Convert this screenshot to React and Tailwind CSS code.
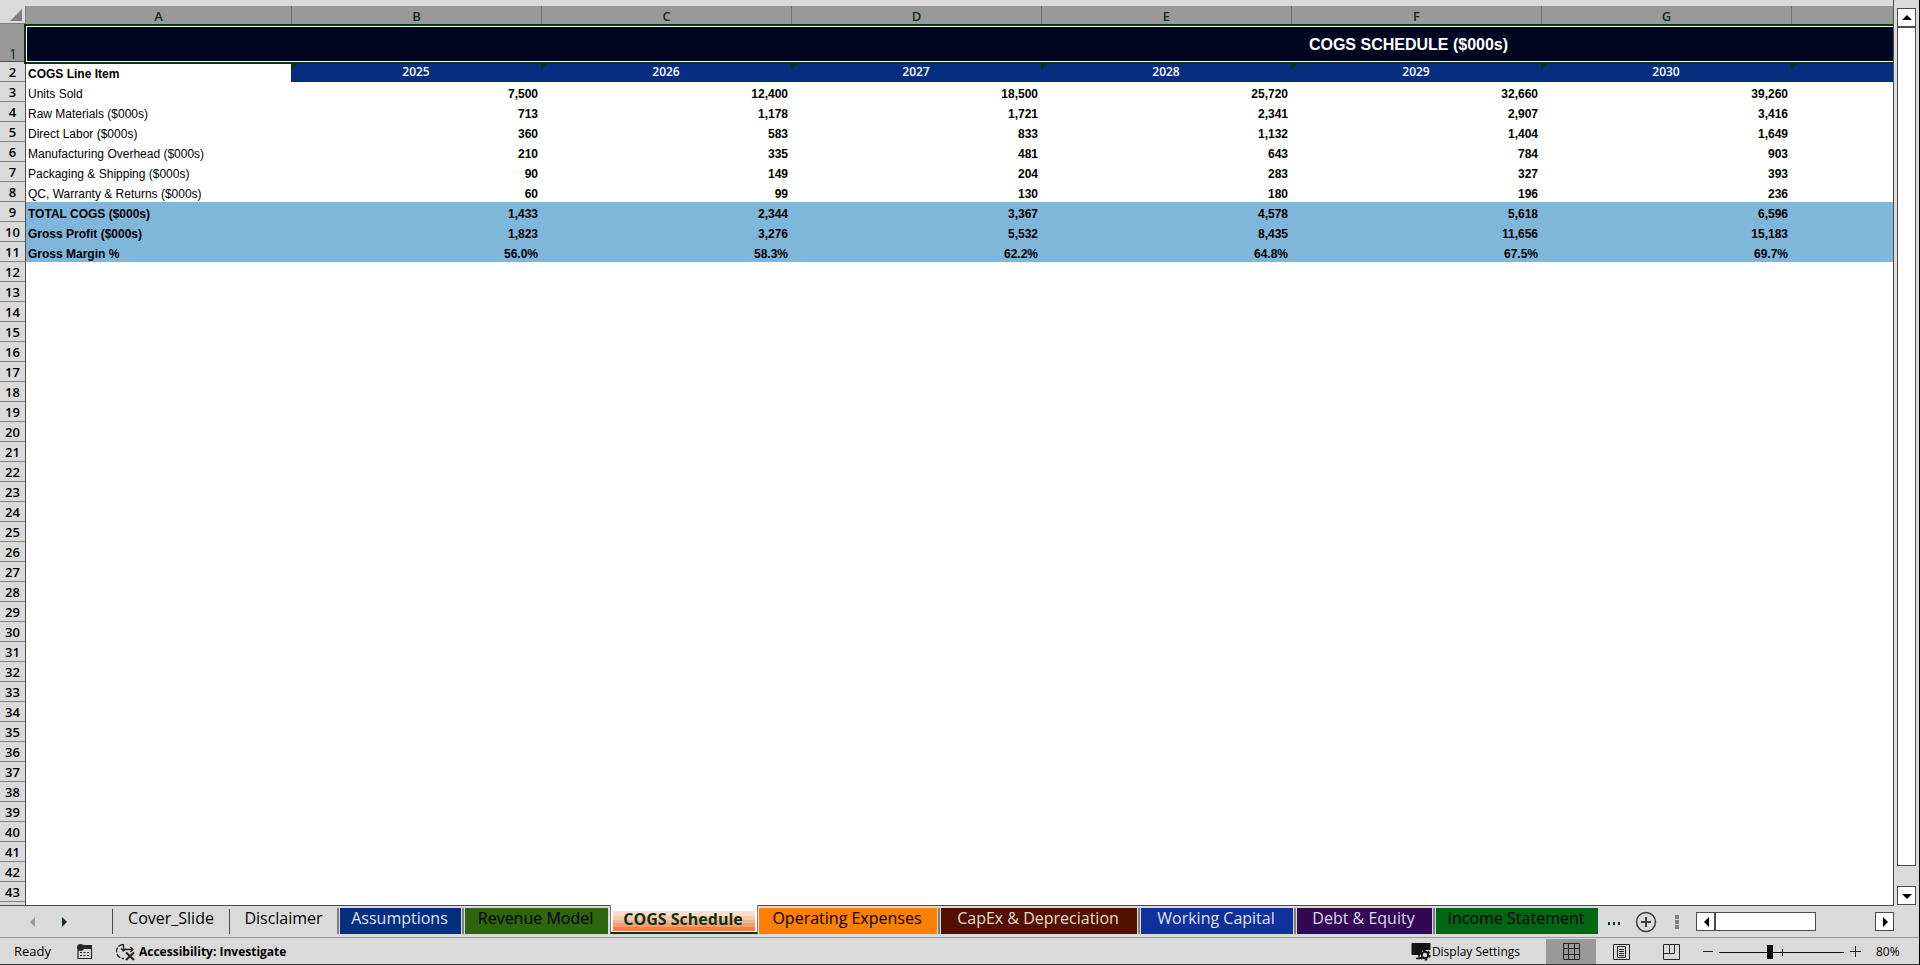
import React from 'react';

const years = ['2025', '2026', '2027', '2028', '2029', '2030', '', '', '', ''];
const letters = ['B', 'C', 'D', 'E', 'F', 'G', '', '', '', ''];

const rows = [
  { label: 'Units Sold', values: ['7,500', '12,400', '18,500', '25,720', '32,660', '39,260'] },
  { label: 'Raw Materials ($000s)', values: ['713', '1,178', '1,721', '2,341', '2,907', '3,416'] },
  { label: 'Direct Labor ($000s)', values: ['360', '583', '833', '1,132', '1,404', '1,649'] },
  { label: 'Manufacturing Overhead ($000s)', values: ['210', '335', '481', '643', '784', '903'] },
  { label: 'Packaging & Shipping ($000s)', values: ['90', '149', '204', '283', '327', '393'] },
  { label: 'QC, Warranty & Returns ($000s)', values: ['60', '99', '130', '180', '196', '236'] },
  { label: 'TOTAL COGS ($000s)', total: true, values: ['1,433', '2,344', '3,367', '4,578', '5,618', '6,596'] },
  { label: 'Gross Profit ($000s)', total: true, values: ['1,823', '3,276', '5,532', '8,435', '11,656', '15,183'] },
  { label: 'Gross Margin %', total: true, values: ['56.0%', '58.3%', '62.2%', '64.8%', '67.5%', '69.7%'] },
];

const emptyRows = Array.from({ length: 32 }, (_, i) => i + 12);

const plainTabs = [
  { name: 'Cover_Slide', width: 'w-[117px]' },
  { name: 'Disclaimer', width: 'w-[108px]' },
];

const tabs = [
  { name: 'Assumptions', cell: 'border-l-2 pl-[1px] pr-[1px]', look: 'w-[121px] bg-[#062e80] text-[#dbe6f5]' },
  { name: 'Revenue Model', cell: 'border-l-2 pl-[1px] pr-[2px]', look: 'w-[143px] bg-[#2d660e] text-black' },
  { name: 'COGS Schedule', active: true },
  { name: 'Operating Expenses', cell: 'pl-[1px] pr-[1px]', look: 'w-[178px] bg-[#ff8000] text-black' },
  { name: 'CapEx & Depreciation', cell: 'border-l-2 pl-[1px] pr-[1px]', look: 'w-[196px] bg-[#521000] text-[#ecdcc8]' },
  { name: 'Working Capital', cell: 'border-l-2 pl-[1px] pr-[1px]', look: 'w-[152px] bg-[#10309c] text-[#dbe6f5]' },
  { name: 'Debt & Equity', cell: 'border-l-2 pl-[1px] pr-[1px]', look: 'w-[135px] bg-[#330852] text-[#dcd8f0]' },
  { name: 'Income Statement', cell: 'border-l-2 pl-[1px] pr-[1px]', look: 'w-[162px] bg-[#006616] text-black' },
];

function RowHead({ n }) {
  return (
    <th scope="row" className="h-[20px] border-r border-b border-r-[#4d4d4d] border-b-[#808080] bg-[#dadada] p-0 pt-[2px] text-center font-['Open_Sans',sans-serif] text-[13px] leading-[17px] font-semibold">
      {n}
    </th>
  );
}

function Sheet() {
  return (
    <table className="w-[2791px] table-fixed border-separate border-spacing-0 font-['Liberation_Sans',Arial,sans-serif] text-[12px] leading-[16px] text-black">
      <colgroup>
        <col className="w-[26px]" />
        <col className="w-[265px]" />
        {years.map((_, i) => (
          <col key={i} className="w-[250px]" />
        ))}
      </colgroup>
      <thead className="font-['Open_Sans',sans-serif] text-[13px] leading-[16px] text-[#0a3314]">
        <tr>
          <th className="h-[18px] border-r border-b border-[#808080] bg-[#dadada] p-0">
            <button aria-label="Select all" className="ml-[10px] block">
              <svg width="13" height="12" aria-hidden="true">
                <path d="M12 0V12H0Z" fill="#808080" />
              </svg>
            </button>
          </th>
          <th scope="col" className="h-[18px] bg-[#999999] p-0 pt-[2px] text-center font-semibold">A</th>
          {letters.map((l, i) => (
            <th key={i} scope="col" className="h-[18px] border-l border-[#707070] bg-[#999999] p-0 pt-[2px] text-center font-semibold">
              {l}
            </th>
          ))}
        </tr>
      </thead>
      <tbody>
        <tr>
          <th scope="row" className="h-[38px] border-b border-[#4d4d4d] bg-[#999999] p-0 text-center align-bottom font-['Open_Sans',sans-serif] text-[14px] leading-[14px] font-normal text-[#0a3314]">
            1
          </th>
          <td colSpan={11} className="relative z-10 border-t-2 border-[#0a3314] p-0 shadow-[0_2px_0_#0a3314,-2px_0_0_#0a3314,-2px_2px_0_#0a3314]">
            <div className="flex h-[36px] items-center justify-center border border-white bg-[#030621] pt-[2px] text-[16px] font-bold text-white">
              COGS SCHEDULE ($000s)
            </div>
          </td>
        </tr>
        <tr>
          <RowHead n={2} />
          <th scope="col" className="p-0 pt-[4px] pl-[2px] text-left font-bold">COGS Line Item</th>
          {years.map((y, i) => (
            <th key={i} scope="col" className="relative bg-[#062e80] p-0 text-center font-['Open_Sans',sans-serif] text-[12px] font-semibold text-white">
              <svg className="absolute top-[2px] left-0" width="6" height="6" aria-hidden="true">
                <path d="M0 0H6L0 6Z" fill="#0a3314" />
              </svg>
              {y}
            </th>
          ))}
        </tr>
        {rows.map((r, i) => (
          <tr key={r.label} className={r.total ? 'bg-[#80b6da]' : ''}>
            <RowHead n={i + 3} />
            <td className={r.total ? 'p-0 pt-[4px] pl-[2px] font-bold' : 'p-0 pt-[4px] pl-[2px]'}>{r.label}</td>
            {years.map((_, c) => (
              <td key={c} className="p-0 pt-[4px] pr-[3px] text-right font-bold">{r.values[c]}</td>
            ))}
          </tr>
        ))}
        {emptyRows.map((n) => (
          <tr key={n}>
            <RowHead n={n} />
            <td colSpan={11} className="p-0" />
          </tr>
        ))}
      </tbody>
    </table>
  );
}

function Arrow({ d }) {
  return (
    <svg width="12" height="12" viewBox="0 0 12 12" aria-hidden="true">
      <path d={d} fill="currentColor" />
    </svg>
  );
}

const UP = 'M6 3L11 8H1Z';
const DOWN = 'M1 4H11L6 9Z';
const LEFT = 'M9 1V11L4 6Z';
const RIGHT = 'M4 1V11L9 6Z';

function ScrollButton({ label, d }) {
  return (
    <button aria-label={label} className="flex size-[19px] shrink-0 items-center justify-center border border-[#4d4d4d] bg-white text-black">
      <Arrow d={d} />
    </button>
  );
}

function VerticalScroll() {
  return (
    <div className="flex w-[25px] shrink-0 flex-col bg-[#dadada] pt-[8px] pl-[3px]">
      <ScrollButton label="Scroll up" d={UP} />
      <div className="w-[19px] flex-1 border border-[#4d4d4d] bg-white" />
      <div className="h-[20px]" />
      <ScrollButton label="Scroll down" d={DOWN} />
    </div>
  );
}

function HorizontalScroll() {
  return (
    <div className="flex w-[198px] shrink-0">
      <ScrollButton label="Scroll left" d={LEFT} />
      <div className="h-[19px] w-[101px] border border-[#4d4d4d] bg-white" />
      <div className="flex-1" />
      <ScrollButton label="Scroll right" d={RIGHT} />
    </div>
  );
}

function TabBar() {
  return (
    <nav aria-label="Sheets" className="flex h-[33px] shrink-0 border-b border-[#999999] bg-[#dadada] font-['Open_Sans',sans-serif] text-[16px]">
      <div className="flex w-[112px] shrink-0 items-center gap-[20px] border-t border-[#4d4d4d] pl-[26px]">
        <button aria-label="Previous sheet" className="text-[#999999]"><Arrow d={LEFT} /></button>
        <button aria-label="Next sheet" className="text-[#0a3314]"><Arrow d={RIGHT} /></button>
      </div>
      {plainTabs.map((t) => (
        <div key={t.name} className="shrink-0 border-t border-[#4d4d4d] pt-[3px]">
          <button className={'block h-[25px] border-l border-[#4d4d4d] pb-[6px] leading-[19px] ' + t.width}>{t.name}</button>
        </div>
      ))}
      {tabs.map((t) =>
        t.active ? (
          <button key={t.name} aria-current="page" className="flex h-[29px] w-[148px] shrink-0 flex-col border-x border-b-2 border-x-[#808080] border-b-[#0a3314] bg-white px-[2px] pt-[6px] font-bold text-[#0a3314]">
            <span className="h-[20px] w-full bg-[linear-gradient(#ffdccf_5px,#fbcba4_5px,#fbcba4_9px,#ecb7a2_9px,#ecb7a2_12px,#ff9a6c_12px,#ff9a6c_16px,#ff7a48_16px)] pr-[2px] leading-[16px]">{t.name}</span>
          </button>
        ) : (
          <div key={t.name} className="shrink-0 border-t border-[#4d4d4d] pt-[2px]">
            <div className={'border-[#808080] ' + t.cell}>
              <button className={'block h-[26px] pr-[2px] pb-[6px] leading-[20px] whitespace-nowrap ' + t.look}>{t.name}</button>
            </div>
          </div>
        )
      )}
      <div className="flex min-w-0 flex-1 items-center border-t border-[#4d4d4d] pl-[8px]">
        <button aria-label="More sheets" className="text-[#0a3314]">
          <svg width="14" height="16" aria-hidden="true">
            <path d="M1 8h2v3H1zM6 8h2v3H6zM11 8h2v3h-2z" fill="currentColor" />
          </svg>
        </button>
        <button aria-label="New sheet" className="ml-[14px]">
          <svg width="22" height="22" viewBox="0 0 22 22" fill="none" stroke="#404040" aria-hidden="true">
            <circle cx="11" cy="11" r="9.500" strokeWidth="1.500" />
            <path d="M11 6V16M6 11H16" strokeWidth="2" />
          </svg>
        </button>
        <svg className="ml-[18px]" width="4" height="16" aria-hidden="true">
          <path d="M0 1h4v4H0zM0 6h4v4H0zM0 11h4v4H0z" fill="#808080" />
        </svg>
        <div className="flex-1" />
        <HorizontalScroll />
      </div>
      <div className="w-[25px] shrink-0" />
    </nav>
  );
}

function StatusBar() {
  return (
    <footer className="flex h-[27px] shrink-0 items-center border-b border-[#333333] bg-[#dadada] pt-px font-['Open_Sans',sans-serif] text-[12px] text-black">
      <span className="w-[63px] pl-[14px] text-[13px]">Ready</span>
      <button aria-label="Record macro" className="ml-[13px]">
        <svg width="17" height="16" viewBox="0 0 17 16" aria-hidden="true">
          <circle cx="4.500" cy="3.500" r="3.500" fill="#262626" />
          <path d="M7 1H16V5H7Z" fill="#262626" />
          <path d="M2 6V14.500H15.500V5" fill="none" stroke="#262626" strokeWidth="1.200" />
          <path d="M4 8.500h2m1.500 0h2m1.500 0h2M4 11.500h2m1.500 0h2m1.500 0h2" stroke="#262626" strokeWidth="1.200" />
        </svg>
      </button>
      <button className="ml-[23px] flex items-center gap-[2px] font-bold">
        <svg width="21" height="18" viewBox="0 0 21 18" fill="none" stroke="#262626" aria-hidden="true">
          <path d="M7 1.500A7 7 0 0 0 8 15.500" strokeWidth="1.400" strokeDasharray="5 1.500" />
          <path d="M7.500 1V8M5 5.500L7.500 8L10 5.500M7.500 6.500H17M14.500 4L17 6.500L14.500 9" strokeWidth="1.300" />
          <path d="M10 9.500L18 17M18 9.500L10 17" strokeWidth="2.200" />
        </svg>
        Accessibility: Investigate
      </button>
      <div className="flex-1" />
      <button className="mr-[26px] flex items-center">
        <svg width="21" height="19" viewBox="0 0 21 19" aria-hidden="true">
          <path d="M1.500 1H18.500Q19.500 1 19.500 2V8H12L9 13H1.500Q0.500 13 0.500 12V2Q0.500 1 1.500 1Z" fill="#141414" />
          <path d="M5 16.500H10M8 13V16" stroke="#141414" strokeWidth="1.500" />
          <circle cx="14" cy="13" r="3.200" fill="#dadada" stroke="#141414" strokeWidth="2" />
          <circle cx="14" cy="13" r="4.800" fill="none" stroke="#141414" strokeWidth="1.800" strokeDasharray="2.500 2.530" />
        </svg>
        Display Settings
      </button>
      <button aria-label="Normal view" aria-pressed="true" className="flex h-full w-[50px] items-center justify-center bg-[#999999]">
        <svg width="17" height="17" viewBox="0 0 17 17" fill="none" stroke="#262626" aria-hidden="true">
          <path d="M.5 .5H16.500V16.500H.5ZM5.500 .5V16.500M11.500 .5V16.500M.5 5.500H16.500M.5 11.500H16.500" />
        </svg>
      </button>
      <button aria-label="Page layout view" className="flex h-full w-[50px] items-center justify-center">
        <svg width="17" height="16" viewBox="0 0 17 16" fill="none" stroke="#262626" aria-hidden="true">
          <path d="M.5 .5H16.500V15.500H.5ZM4.500 2.500H12.500V13.500H4.500ZM6 5.500H11M6 7.500H11M6 9.500H11M6 11.500H11" />
        </svg>
      </button>
      <button aria-label="Page break preview" className="flex h-full w-[50px] items-center justify-center">
        <svg width="17" height="16" viewBox="0 0 17 16" fill="none" stroke="#262626" aria-hidden="true">
          <path d="M.5 .5H16.500V15.500H.5ZM.5 9.500H11.500V.5M6.500 .5V9.500" />
        </svg>
      </button>
      <button aria-label="Zoom out" className="ml-[7px]">
        <svg width="10" height="11" aria-hidden="true"><path d="M0 5.500H10" stroke="#262626" /></svg>
      </button>
      <div className="relative mx-[6px] flex h-[16px] w-[125px] items-center">
        <svg className="absolute inset-0" width="125" height="16" aria-hidden="true">
          <path d="M0 8.500H125M63.500 5V12" stroke="#0d0d0d" />
        </svg>
        <input
          type="range"
          aria-label="Zoom"
          min="0"
          max="100"
          defaultValue="40"
          className="relative h-[16px] w-full appearance-none bg-transparent [&::-webkit-slider-thumb]:h-[14px] [&::-webkit-slider-thumb]:w-[6px] [&::-webkit-slider-thumb]:appearance-none [&::-webkit-slider-thumb]:bg-[#0d0d0d]"
        />
      </div>
      <button aria-label="Zoom in">
        <svg width="11" height="11" aria-hidden="true"><path d="M0 5.500H11M5.500 0V11" stroke="#262626" /></svg>
      </button>
      <button className="w-[58px] pl-[15px] text-left">80%</button>
    </footer>
  );
}

export default function App() {
  return (
    <div className="flex h-screen flex-col overflow-hidden border-r border-black bg-[#dadada]">
      <div className="flex min-h-0 flex-1">
        <main className="flex min-w-0 flex-1 flex-col overflow-hidden border-r border-[#4d4d4d] bg-white">
          <div className="h-[6px] shrink-0 bg-[#dadada]" />
          <Sheet />
          <div className="w-[26px] flex-1 border-r border-[#4d4d4d] bg-[#dadada]" />
        </main>
        <VerticalScroll />
      </div>
      <TabBar />
      <StatusBar />
    </div>
  );
}
